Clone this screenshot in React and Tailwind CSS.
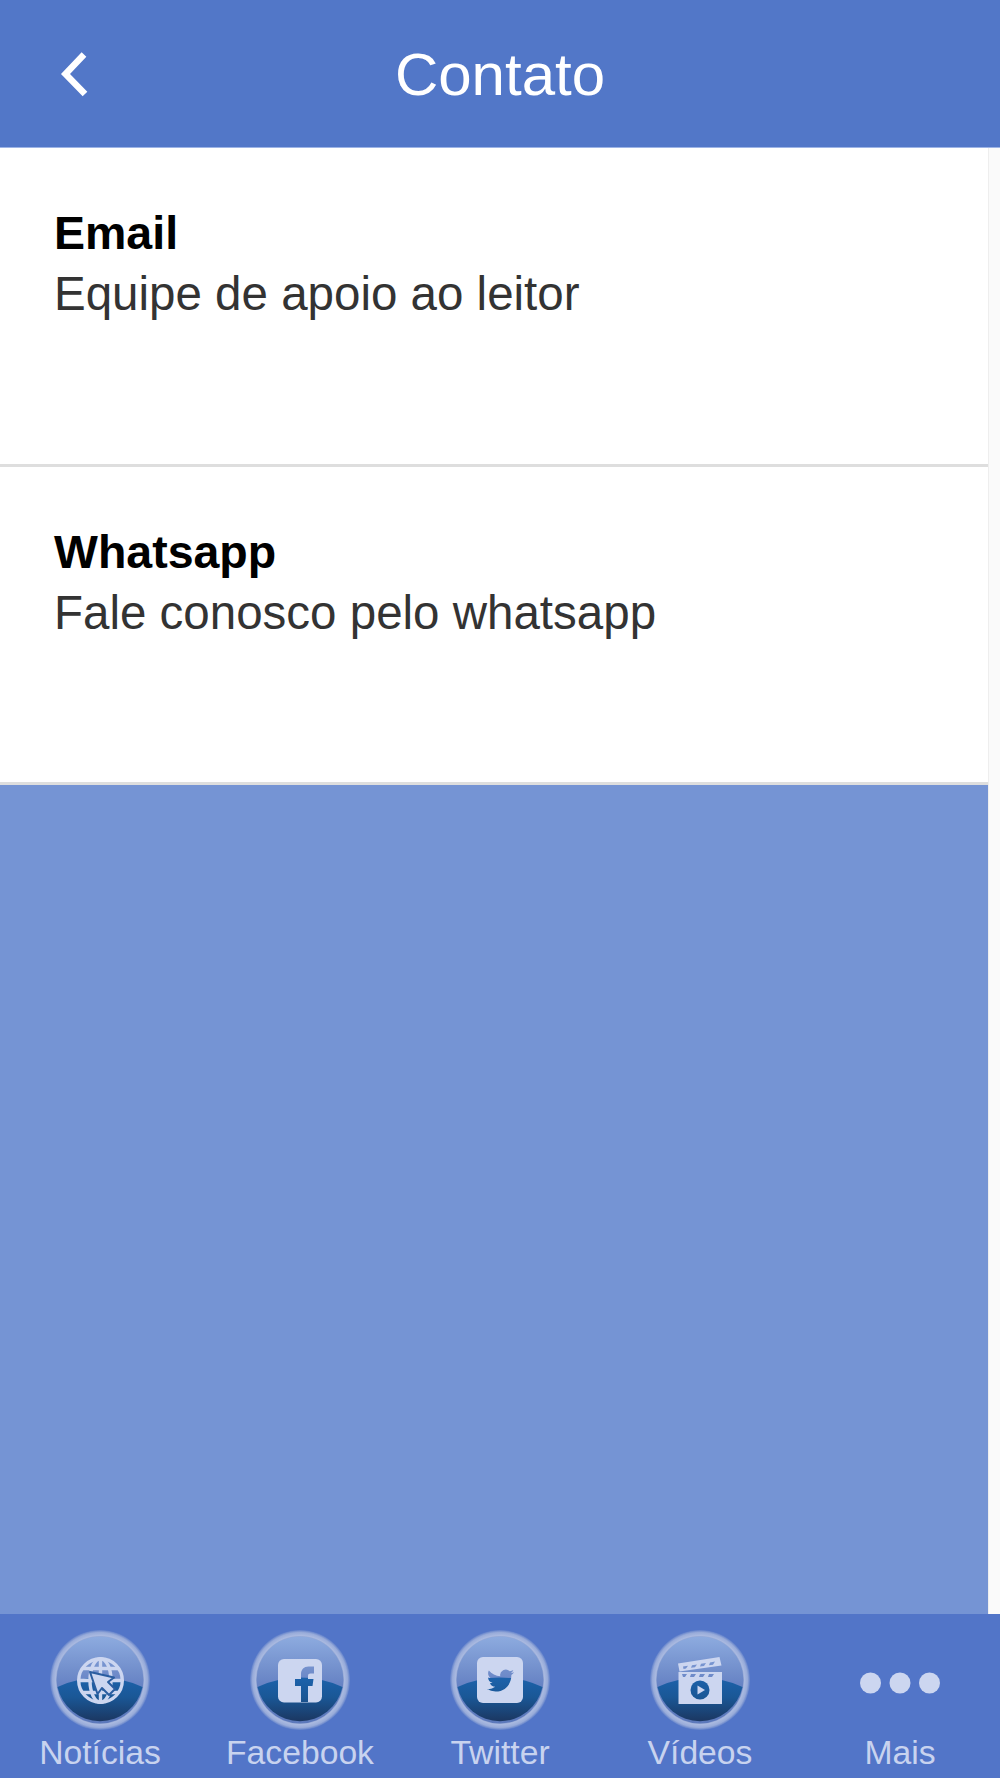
import React from 'react'

const helvetica = { fontFamily: '"Liberation Sans", Arial, sans-serif' }

// glossy round button behind the tab icons
const Badge = ({ name, glyph, children }) => {
  return (
    <svg width="100" height="100" viewBox="0 0 100 100" className="block">
      <defs>
        <radialGradient id={name + '-ring'} cx="0.5" cy="0.5" r="0.5">
          <stop offset="0.84" stopColor="#7d92c6" />
          <stop offset="0.89" stopColor="#a9b9e0" />
          <stop offset="0.95" stopColor="#98abd9" />
          <stop offset="1" stopColor="#5f7fca" />
        </radialGradient>
        <linearGradient id={name + '-top'} x1="0" y1="0" x2="0" y2="1">
          <stop offset="0" stopColor="#8dabdf" />
          <stop offset="0.55" stopColor="#6783c4" />
          <stop offset="1" stopColor="#5b78bb" />
        </linearGradient>
        <linearGradient id={name + '-bottom'} x1="0" y1="0" x2="0" y2="1">
          <stop offset="0" stopColor="#1c62ab" />
          <stop offset="0.45" stopColor="#1a5796" />
          <stop offset="1" stopColor="#1b3761" />
        </linearGradient>
        {glyph && (
          <mask id={name + '-mask'}>
            <rect width="100" height="100" fill="white" />
            {glyph}
          </mask>
        )}
      </defs>
      <circle cx="50" cy="50" r="50" fill={'url(#' + name + '-ring)'} />
      <circle cx="50" cy="50" r="43.5" fill={'url(#' + name + '-top)'} />
      <path d="M7.5 57 Q28 47.5 50 47.5 Q72 47.5 92.5 57 A43.5 43.5 0 0 1 7.5 57 Z" fill={'url(#' + name + '-bottom)'} />
      {children}
    </svg>
  )
}

const GlobeIcon = () => (
  <Badge name="globe">
    <g fill="none" stroke="#ccd6f0" strokeWidth="3.4">
      <circle cx="50.5" cy="50.5" r="21.8" />
      <ellipse cx="50.5" cy="50.5" rx="10.5" ry="21.8" />
      <path d="M50.5 28.7V72.3M29 50.5H72M32 38.5H69M32 62.5H69" />
    </g>
    <path d="M40 42L64 47.5L58 52L65 59L59 65L52 58L47.5 64Z" fill="#ccd6f0" stroke="#2a5da0" strokeWidth="2" strokeLinejoin="round" />
  </Badge>
)

const FacebookIcon = () => (
  <Badge
    name="facebook"
    glyph={<path d="M51 72V56H45V49H51V44C51 39.5 54 36.5 58.5 36.5H64V43.5H60.5C58.8 43.5 58 44.3 58 46V49H63.5L62.5 56H58V72Z" fill="black" />}
  >
    <rect x="28" y="29" width="44" height="43.5" rx="6" fill="#ccd6f0" mask="url(#facebook-mask)" />
  </Badge>
)

const TwitterIcon = () => (
  <Badge
    name="twitter"
    glyph={
      <g transform="translate(37 37) scale(1.13)">
        <path
          d="M23.953 4.57a10 10 0 01-2.825.775 4.958 4.958 0 002.163-2.723c-.951.555-2.005.959-3.127 1.184a4.92 4.92 0 00-8.384 4.482C7.69 8.095 4.067 6.13 1.64 3.162a4.822 4.822 0 00-.666 2.475c0 1.71.87 3.213 2.188 4.096a4.904 4.904 0 01-2.228-.616v.06a4.923 4.923 0 003.946 4.827 4.996 4.996 0 01-2.212.085 4.936 4.936 0 004.604 3.417 9.867 9.867 0 01-6.102 2.105c-.39 0-.779-.023-1.17-.067a13.995 13.995 0 007.557 2.209c9.053 0 13.998-7.496 13.998-13.985 0-.21 0-.42-.015-.63A9.935 9.935 0 0024 4.59z"
          fill="black"
        />
      </g>
    }
  >
    <rect x="27" y="27" width="46" height="46" rx="6" fill="#ccd6f0" mask="url(#twitter-mask)" />
  </Badge>
)

const VideoIcon = () => (
  <Badge
    name="video"
    glyph={
      <g fill="black">
        <path d="M33 36.5L38 35.8L36 38.5L33.5 39ZM42 35.2L47 34.4L45 37.3L41 37.8ZM51 33.8L56 33L54 36L50 36.6ZM60 32.4L65 31.6L63 34.7L59 35.2Z" />
        <path d="M32 44H37L35 47H33ZM41 44H46L44 47H40ZM50 44H55L53 47H49ZM59 44H64L62 47H58Z" />
        <circle cx="50" cy="60" r="9.5" />
      </g>
    }
  >
    <path d="M28 33.5L69.5 27L71.5 35.5L29.5 41.5ZM28.5 42H72V74H28.5Z" fill="#ccd6f0" mask="url(#video-mask)" />
    <path d="M47.5 55.5L55 60L47.5 64.5Z" fill="#ccd6f0" />
  </Badge>
)

const MoreIcon = () => (
  <svg width="100" height="100" viewBox="0 0 100 100" className="block">
    <circle cx="20.5" cy="53" r="10.5" fill="#ccd6f0" />
    <circle cx="50" cy="53" r="10.5" fill="#ccd6f0" />
    <circle cx="79.5" cy="53" r="10.5" fill="#ccd6f0" />
  </svg>
)

const tabs = [
  { label: 'Notícias', icon: <GlobeIcon /> },
  { label: 'Facebook', icon: <FacebookIcon /> },
  { label: 'Twitter', icon: <TwitterIcon /> },
  { label: 'Vídeos', icon: <VideoIcon /> },
  { label: 'Mais', icon: <MoreIcon /> },
]

const contacts = [
  { title: 'Email', text: 'Equipe de apoio ao leitor' },
  { title: 'Whatsapp', text: 'Fale conosco pelo whatsapp' },
]

const App = () => {
  return (
    <div className="flex flex-col h-[1778px] bg-white" style={helvetica}>
      {/* Header */}
      <header className="grid grid-cols-[1fr_auto_1fr] items-center h-[148px] bg-[#5277c8] border-b border-[#9db4e6] text-white">
        <svg width="34" height="48" viewBox="0 0 34 48" fill="none" className="ml-[56px]">
          <path d="M28 4.5L9.5 24L29 44" stroke="white" strokeWidth="6.5" />
        </svg>
        <h1 className="text-[60px] leading-[60px] pt-[3px]">Contato</h1>
      </header>

      {/* Content */}
      <div className="flex flex-1 min-h-0">
        <main className="flex flex-col flex-1">
          {contacts.map((c) => (
            <div key={c.title} className="h-[318.5px] pt-[55px] pl-[54px] border-b-[3px] border-[#dedede] bg-white">
              <h2 className="text-[46.5px] leading-[60px] font-bold text-black">{c.title}</h2>
              <p className="text-[47.5px] leading-[60px] mt-[1px] text-[#333333]">{c.text}</p>
            </div>
          ))}
          <div className="flex-1 bg-[#7594d4]" />
        </main>
        <div className="w-[12px] bg-[#fafafa] border-l border-[#eeeeee]" />
      </div>

      {/* Tab bar */}
      <nav className="grid grid-cols-5 h-[164px] pt-[16px] bg-[#5275c8]">
        {tabs.map((t) => (
          <div key={t.label} className="flex flex-col items-center">
            {t.icon}
            <span className="mt-[4px] text-[33.7px] leading-[36px] text-[#c8d3ef]">{t.label}</span>
          </div>
        ))}
      </nav>
    </div>
  )
}

export default App
